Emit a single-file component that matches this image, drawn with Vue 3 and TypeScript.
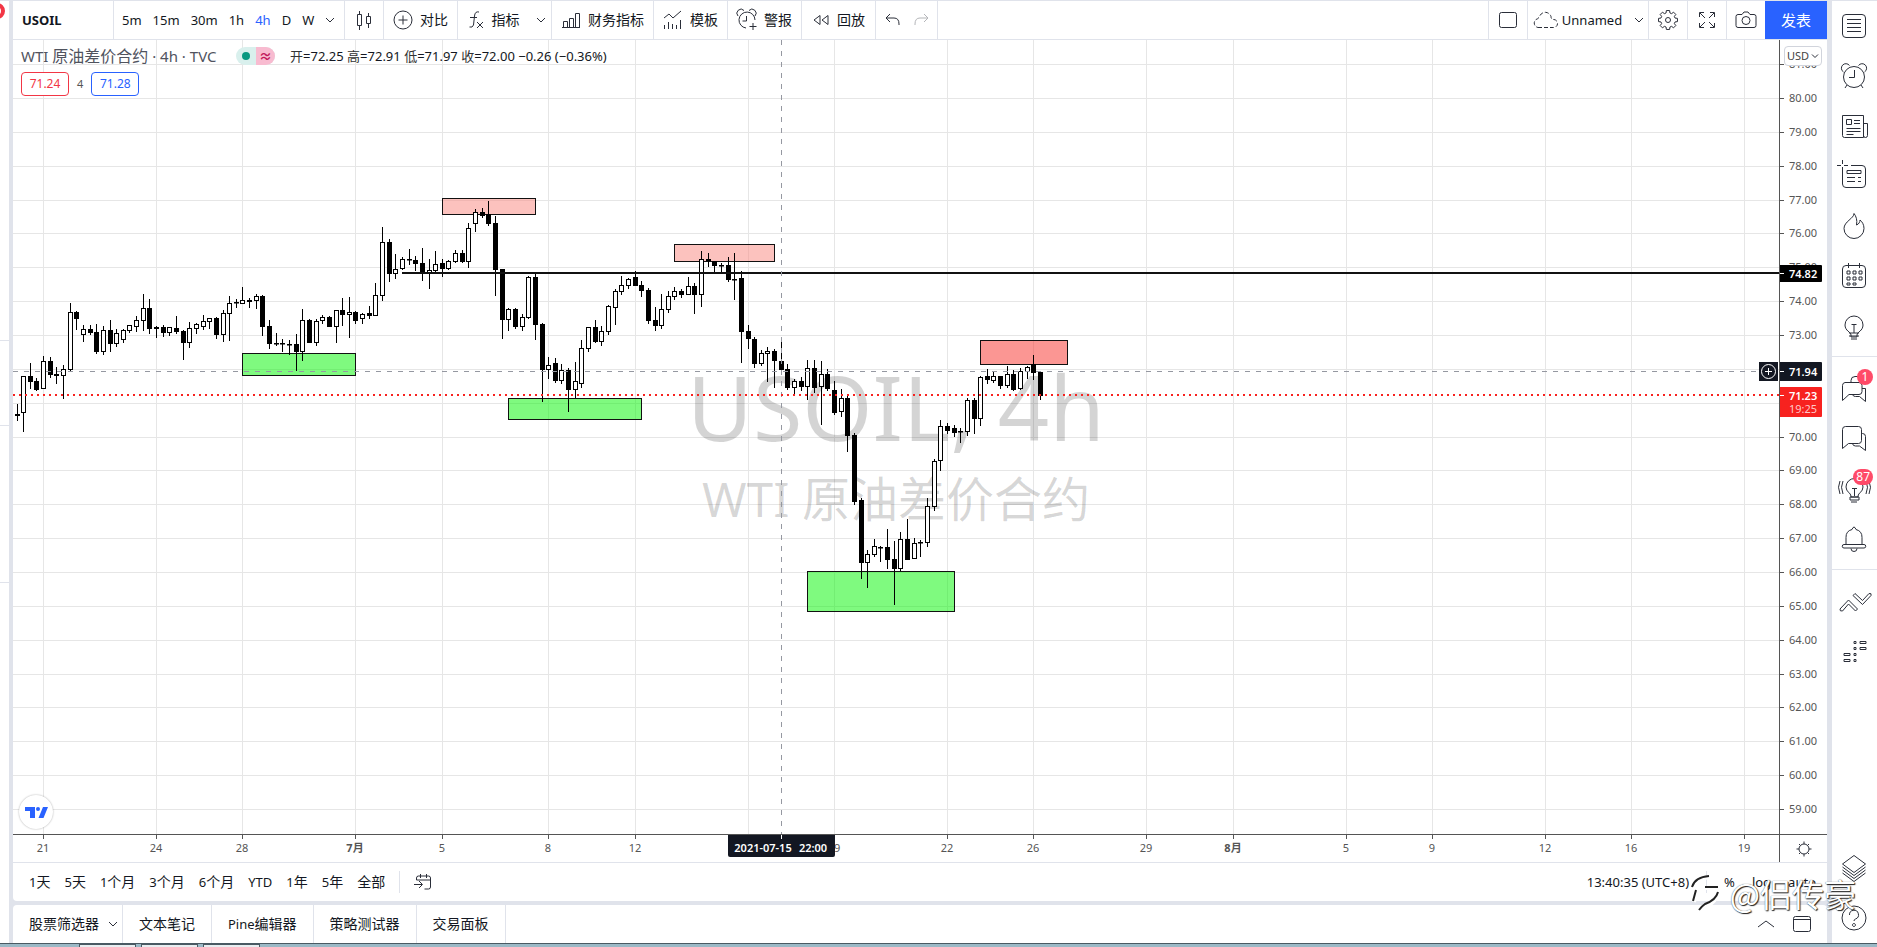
<script setup lang="ts">
interface Candle { x: number; high: number; top: number; bottom: number; low: number; down: boolean }

// x, high, body top, body bottom, low, falling
const series = `17 404 414 416 421 1;23 376 376 413 432 0;30 363 376 382 389 1;36 378 381 390 391 1;43 356 361 389 389 0;50 357 361 375 378 1;56 367 374 376 384 1;63 365 369 376 399 0;70 303 312 370 371 0;76 311 312 319 330 1;83 325 329 335 342 0;90 325 329 333 335 1;96 324 332 352 354 1;103 326 330 352 355 0;110 320 330 344 352 1;116 329 333 344 347 0;123 329 330 340 343 0;129 325 325 331 333 0;136 316 320 327 332 0;143 294 308 321 331 0;149 299 308 329 334 1;156 326 327 329 338 1;163 325 327 333 337 1;169 327 327 333 336 0;176 316 328 332 334 1;183 330 331 343 360 1;189 322 328 343 348 0;196 323 324 329 334 0;203 315 321 327 330 0;209 318 318 322 329 0;216 317 318 335 339 1;223 310 313 335 342 0;229 296 303 314 341 0;236 299 302 303 308 1;242 287 300 304 304 0;249 298 300 302 308 1;256 294 296 301 309 0;262 295 296 327 336 1;269 320 326 344 349 1;276 333 343 344 346 1;282 339 343 344 352 1;289 340 344 344 355 1;296 334 344 352 371 1;302 309 320 352 361 0;309 319 320 343 343 1;316 319 321 343 346 0;322 315 317 321 324 0;329 316 317 327 327 1;336 310 310 327 343 0;342 298 310 315 326 1;349 297 312 315 338 0;355 311 312 321 324 1;362 313 314 319 324 0;369 306 313 316 319 1;375 283 295 316 316 0;382 227 242 296 301 0;389 239 242 274 282 1;395 254 269 274 279 0;402 257 259 269 270 0;409 249 259 260 265 1;415 256 260 264 271 1;422 248 263 274 281 1;429 259 270 273 289 0;435 251 264 271 272 0;442 259 263 269 277 1;448 260 261 269 270 0;455 250 253 262 263 0;462 250 253 262 263 1;468 223 228 262 268 0;475 209 212 224 232 0;482 208 212 216 218 1;488 201 214 224 226 1;495 216 223 270 296 1;502 269 269 320 339 1;508 308 309 320 331 0;515 308 309 327 329 1;522 314 317 327 331 0;528 276 277 318 319 0;535 274 277 325 340 1;542 323 324 370 402 1;548 357 365 370 379 0;555 358 363 381 383 1;561 364 370 381 384 0;568 368 370 390 412 1;575 362 381 390 398 0;581 340 348 384 388 0;588 327 327 349 352 0;595 320 327 342 343 1;601 326 331 342 346 0;608 305 306 332 335 0;615 289 291 308 325 0;621 276 285 292 295 0;628 278 279 286 289 0;635 271 277 286 286 1;641 281 285 291 297 1;648 288 290 321 324 1;655 307 320 326 331 1;661 294 309 326 329 0;668 291 296 310 313 0;674 287 291 297 300 0;681 289 291 295 298 1;688 277 286 295 295 0;694 283 286 295 314 1;701 251 259 295 307 0;708 253 259 261 267 1;714 261 261 266 272 1;721 263 265 265 272 1;728 257 265 280 282 1;734 253 279 280 300 1;741 271 278 332 363 1;748 325 331 339 349 1;754 337 339 364 368 1;761 350 353 364 366 0;767 347 351 354 382 0;774 349 351 361 388 1;781 342 361 370 370 1;787 364 369 388 390 1;794 379 381 388 394 0;801 377 381 387 391 1;807 360 368 387 400 0;814 360 368 388 393 1;821 361 374 387 425 0;827 369 374 389 391 1;834 381 390 413 415 1;841 389 398 412 417 0;847 396 398 436 452 1;854 433 435 502 505 1;861 498 500 563 579 1;867 550 554 563 588 0;874 539 546 555 557 0;880 546 547 548 562 1;887 529 547 560 569 1;894 541 559 569 605 1;900 532 539 569 571 0;907 519 539 560 560 1;914 538 543 559 559 0;920 540 542 543 557 1;927 498 506 543 547 0;934 459 461 507 511 0;940 420 426 461 471 0;947 423 426 431 434 1;954 425 428 433 437 1;960 428 431 432 443 1;967 398 400 432 436 0;974 398 400 419 434 1;980 376 377 419 426 0;987 369 376 380 384 1;993 372 376 381 383 0;1000 376 376 386 389 1;1007 366 374 386 388 0;1013 370 374 390 391 1;1020 368 371 389 390 0;1027 366 367 372 379 0;1033 355 364 373 380 1;1040 372 372 396 400 1`

const candles: Candle[] = series.split(';').map(row => {
  const [x, high, top, bottom, low, down] = row.split(' ').map(Number)
  return { x, high, top, bottom, low, down: down === 1 }
})

const zones = [
  { x: 242, y: 353, w: 113, h: 22, kind: 'green' },
  { x: 442, y: 198, w: 93, h: 16, kind: 'pink' },
  { x: 508, y: 398, w: 133, h: 21, kind: 'green' },
  { x: 674, y: 244, w: 100, h: 17, kind: 'pink' },
  { x: 807, y: 571, w: 147, h: 40, kind: 'green' },
  { x: 980, y: 340, w: 87, h: 24, kind: 'red' },
]

const prices = Array.from({ length: 23 }, (_, i) => {
  const value = 81 - i
  return { value, y: Math.round(98 + (80 - value) * 33.86) }
})
const shownPrices = prices.filter(p => p.value !== 72 && p.value !== 71)

const dates = [
  [43, '21'], [156, '24'], [242, '28'], [355, '7月'], [442, '5'], [548, '8'], [635, '12'], [748, ''], [834, '19'],
  [947, '22'], [1033, '26'], [1146, '29'], [1233, '8月'], [1346, '5'], [1432, '9'], [1545, '12'], [1631, '16'], [1744, '19'],
].map(([x, label]) => ({ x: Number(x), label: String(label) }))

const intervals = ['5m', '15m', '30m', '1h', '4h', 'D', 'W']
const ranges: [string, string][] = [['1', '天'], ['5', '天'], ['1', '个月'], ['3', '个月'], ['6', '个月'], ['YTD', ''], ['1', '年'], ['5', '年'], ['', '全部']]

// Eight-tooth cog outline around (11, 11)
const gear = Array.from({ length: 8 }, (_, i) => [[-0.27, 7.3], [-0.17, 9.6], [0.17, 9.6], [0.27, 7.3]].map(([turn, r], k) => {
  const a = i * Math.PI / 4 + turn
  return `${i + k === 0 ? 'M' : 'L'}${(11 + r * Math.cos(a)).toFixed(2)} ${(11 + r * Math.sin(a)).toFixed(2)}`
}).join('')).join('') + 'z'

const bulb = 'M12 26v-2c0-3-6-4-6-10a9 9 0 0 1 18 0c0 6-6 7-6 10v2zM10 22h10M10 25h10M12 28h6M15 22v-8M12.500 13.500h5'
const sideTop = [
  { name: '自选表', d: 'M7 3.500h16a3.500 3.500 0 0 1 3.500 3.500v16a3.500 3.500 0 0 1-3.500 3.500h-16a3.500 3.500 0 0 1-3.500-3.500v-16a3.500 3.500 0 0 1 3.500-3.500zM8 8.500h14M8 12.500h14M8 16.500h14M8 20.500h14' },
  { name: '警报', d: 'M25.500 16a10.500 10.500 0 1 1-21 0a10.500 10.500 0 1 1 21 0zM15.500 9v7.500h-5.500M4.500 11a4.500 4.500 0 1 1 6-6.500M25.500 11a4.500 4.500 0 1 0-6-6.500M8 24l-2 3M22 24l2 3' },
  { name: '新闻', d: 'M3.500 4.500h21v22h-19a2 2 0 0 1-2-2zM24.500 12.500h4v12a2 2 0 0 1-4 0M7.500 8.500h5v5h-5zM15 9.500h6M15 12.500h6M7.500 17.500h14M7.500 20.500h14M7.500 23.500h7' },
  { name: '数据窗口', d: 'M12 4.500h11a3.500 3.500 0 0 1 3.500 3.500v15a3.500 3.500 0 0 1-3.500 3.500h-16a3.500 3.500 0 0 1-3.500-3.500v-14M3.500-1v4M3.500 6v3M-2 4.500h4M5 4.500h4M8 9.500h14v3h-14zM8 16.500h8M19 16.500h3M8 20.500h8M19 20.500h3' },
  { name: '热点', d: 'M15 2.500c0 5-10 8-10 15a10 10 0 0 0 20 0c0-4-2-7-4-8.500c0 2-1 4-3.500 5c1-5-.5-9-2.500-11.500z' },
  { name: '日历', d: 'M7 4.500h16a3.500 3.500 0 0 1 3.500 3.500v15a3.500 3.500 0 0 1-3.500 3.500h-16a3.500 3.500 0 0 1-3.500-3.500v-15a3.500 3.500 0 0 1 3.500-3.500zM9.500 2v5M20.500 2v5M8 10h3v3h-3zM14 10h3v3h-3zM20 10h3v3h-3zM8 16h3v3h-3zM14 16h3v3h-3zM20 16h3v3h-3zM8 22h3v2h-3zM14 22h3v2h-3z' },
  { name: '观点', d: bulb },
]
const sideMid = [
  { name: '公共聊天', badge: '1', d: 'M6 8.500h14a3 3 0 0 1 3 3v6a3 3 0 0 1-3 3h-10l-6.500 6v-15a3 3 0 0 1 2.500-3zM12 8.500v-2a4 4 0 0 1 4-4h6M23 14.500h3.500v13l-6-5h-4a3 3 0 0 1-3-2' },
  { name: '私人聊天', badge: '', d: 'M6.500 2.500h13a3 3 0 0 1 3 3v11a3 3 0 0 1-3 3h-10l-6 5v-19a3 3 0 0 1 3-3zM22.500 9.500h1a3 3 0 0 1 3 3v14l-6-4.500h-4a3 3 0 0 1-3-2.500' },
  { name: '观点流', badge: '87', d: 'M12 23v-1c0-3-5-4-5-9a8.500 8.500 0 0 1 17 0c0 5-5 6-5 9v1zM11 23h9v3h-9zM12 28h6M15.500 22v-7M13 14.500h5M4 7q-3 6 0 13M1 7q-3 6 0 13M27 7q3 6 0 13M30 7q3 6 0 13' },
  { name: '通知', badge: '', d: 'M7 20.500v-7a8 8 0 0 1 6-8q2-5 4 0a8 8 0 0 1 6 8v7M5 20.500h20a1.500 1.500 0 0 1 0 3.500h-20a1.500 1.500 0 0 1 0-3.500zM12 24.500a3 3 0 0 0 6 0' },
]
const sideLow = [
  { name: '订单面板', d: 'M1 22l8.500-9l9 9l-2 2l-7-7l-6 7q-3 .5-2.500-2zM14 8.500l2-2l7.500 7l6.500-7q3-.5 2 2l-8.500 9z' },
  { name: '深度报价', d: 'M15 4.500h2v2h-2zM21 4.500h6v2h-6zM15 10.500h2v2h-2zM21 10.500h6v2h-6zM5 16.500h6v2h-6zM15 16.500h2v2h-2zM5 22.500h6v2h-6zM15 22.500h2v2h-2z' },
]
const caret = 'M1 3l4 4l4-4'
</script>

<template>
  <div class="app">
    <div class="workspace">
      <aside class="left-edge"><span class="edge-badge"></span><i class="edge-line one"></i><i class="edge-line two"></i><i class="edge-line three"></i></aside>

      <main class="main">
        <header class="toolbar">
          <button class="symbol">USOIL</button>
          <div class="cell intervals">
            <button v-for="i in intervals" :key="i" :class="{ on: i === '4h' }">{{ i }}</button>
            <button aria-label="更多周期"><svg width="10" height="10"><path :d="caret" /></svg></button>
          </div>
          <button class="cell icon-only" aria-label="K线图"><svg width="18" height="22"><path d="M2.500 5.500h4v11h-4zM4.500 2v3M4.500 17v4M11.500 7.500h4v7h-4zM13.500 4v3M13.500 15v4" /></svg></button>
          <button class="cell"><svg width="20" height="20"><path d="M19 10a9 9 0 1 1-18 0a9 9 0 1 1 18 0zM10 5.500v9M5.500 10h9" /></svg>对比</button>
          <button class="cell wide-icon"><svg width="16" height="20"><path d="M11 2q-4-1-4.500 4l-1 9q-1 3-4 2M2 7.500h7M9 12l6 6M15 12l-6 6" /></svg>指标<svg class="far" width="10" height="10"><path :d="caret" /></svg></button>
          <button class="cell"><svg width="20" height="20"><path d="M2.500 17.500v-6h4v6zM8.500 17.500v-9h4v9zM14.500 17.500v-14h4v14zM1 17.500h18" /></svg>财务指标</button>
          <button class="cell"><svg width="20" height="20"><path d="M1 8l5-4l4 4l8-7M1.500 15v4M5.500 12v7M9.500 14v5M13.500 15v4M17.500 10v9" /></svg>模板</button>
          <button class="cell"><svg width="20" height="22"><path d="M9 19a8 8 0 1 1 9-8M9.500 7v5h-4M1 7a4 4 0 0 1 6-5.500M12 1.500a4 4 0 0 1 6 5.500M16 14v7M12.500 17.500h7" /></svg>警报</button>
          <button class="cell replay"><svg width="18" height="20"><path d="M8 5.500v9l-6-4.500zM16 5.500v9l-6-4.500z" /></svg>回放</button>
          <div class="cell history">
            <button aria-label="撤销"><svg width="16" height="16"><path d="M5 2l-4 4l4 4M1 6h8q5 0 5 6v1" /></svg></button>
            <button class="faded" aria-label="重做"><svg width="16" height="16"><path d="M11 2l4 4l-4 4M15 6h-8q-5 0-5 6v1" /></svg></button>
          </div>
          <span class="grow"></span>
          <button class="cell tool" aria-label="布局"><svg width="20" height="18"><rect x="1.500" y="1.500" width="17" height="15" rx="2" /></svg></button>
          <button class="cell layout-name"><svg width="26" height="20"><path stroke-dasharray="4 2" d="M6 17.500h15a4 4 0 0 0 1-8q-3 0-3-3a6 6 0 0 0-11-1q-1 3-4 4a4.500 4.500 0 0 0 2 8z" /></svg><span>Unnamed</span><svg class="far" width="10" height="10"><path :d="caret" /></svg></button>
          <button class="cell tool" aria-label="设置"><svg width="22" height="22"><path stroke-linejoin="round" :d="gear" /><circle cx="11" cy="11" r="2.500" /></svg></button>
          <button class="cell tool" aria-label="全屏"><svg width="18" height="18"><path d="M1.500 6v-4.500h4.500M2 2l5 5M12 1.500h4.500v4.500M16 2l-5 5M1.500 12v4.500h4.500M2 16l5-5M16.500 12v4.500h-4.500M16 16l-5-5" /></svg></button>
          <button class="cell tool" aria-label="截图"><svg width="22" height="18"><path d="M3 3.500h4l2-2.500h4l2 2.500h4a2 2 0 0 1 2 2v9a2 2 0 0 1-2 2h-16a2 2 0 0 1-2-2v-9a2 2 0 0 1 2-2zM15 9.500a4 4 0 1 1-8 0a4 4 0 1 1 8 0z" /></svg></button>
          <button class="publish">发表</button>
        </header>

        <section class="plot">
          <div class="canvas">
            <svg class="layer" aria-label="USOIL 4h">
              <g transform="translate(-13,-40)">
                <path v-for="p in prices" :key="p.value" class="grid" :d="`M13 ${p.y + .5}H4000`" />
                <path v-for="d in dates" :key="d.x" class="grid" :d="`M${d.x + .5} 40V3000`" />
              </g>
            </svg>
            <div class="watermark"><strong>USOIL, 4h</strong><span>WTI 原油差价合约</span></div>
            <svg class="layer">
              <g transform="translate(-13,-40)">
                <rect v-for="z in zones" :key="z.x" :class="['zone', z.kind]" :x="z.x + .5" :y="z.y + .5" :width="z.w" :height="z.h" />
                <g v-for="c in candles" :key="c.x">
                  <path class="wick" :d="`M${c.x + .5} ${c.high}V${c.low}`" />
                  <rect :class="['body', { down: c.down }]" :x="c.x - 1.5" :y="c.top + .5" width="4" :height="Math.max(c.bottom - c.top - 1, 0.5)" />
                </g>
                <path class="level" d="M402 273H4000" />
                <path class="cross" d="M13 371.500H4000M781.500 40V3000" />
                <path class="last" d="M13 395H4000" />
              </g>
            </svg>

            <div class="legend">
              <div class="title"><h1><small>WTI </small>原油差价合约<small> · 4h · TVC</small></h1>
                <span class="status"><i></i><b>≈</b></span>
                <p>开<em>=72.25</em> 高<em>=72.91</em> 低<em>=71.97</em> 收<em>=72.00 −0.26 (−0.36%)</em></p>
              </div>
              <div class="quotes"><button class="sell">71.24</button><span>4</span><button class="buy">71.28</button></div>
            </div>
            <a class="logo" href="#" aria-label="TradingView"><svg width="34" height="34"><path d="M6 12h10v11h-5v-7h-5zM24 12h5l-4.500 11h-5z" /><circle cx="19" cy="14" r="2" /></svg></a>
            <button class="add" aria-label="添加"><svg width="19" height="19"><circle cx="9.500" cy="9.500" r="7" /><path d="M9.500 6v7M6 9.500h7" /></svg></button>
          </div>
          <div class="price-axis">
            <svg class="layer">
              <g transform="translate(-1780,-40)">
                <g v-for="p in shownPrices" :key="p.value">
                  <path class="tick" :d="`M1780 ${p.y + .5}h4`" /><text x="1789" :y="p.y + 4">{{ p.value }}.00</text>
                </g>
                <rect x="1779" y="265" width="43" height="17" rx="1" />
                <rect class="ink" x="1779" y="362" width="43" height="19" rx="1" />
                <rect class="red" x="1779" y="387" width="43" height="30" rx="1" />
                <path class="tick light" d="M1780 273.500h4M1780 371.500h4M1780 395.500h4" />
                <text class="bold" x="1789" y="278">74.82</text>
                <text class="bold" x="1789" y="376">71.94</text>
                <text class="bold" x="1789" y="400">71.23</text>
                <text class="soft" x="1789" y="413">19:25</text>
              </g>
            </svg>
            <button class="currency">USD<svg width="8" height="8"><path d="M1 2.500l3 3l3-3" /></svg></button>
          </div>
        </section>

        <section class="time-axis">
          <svg class="times">
            <g transform="translate(-13,0)">
              <g v-for="d in dates" :key="d.x"><path class="tick" :d="`M${d.x + .5} 0v4`" /><text v-if="d.label" :class="{ month: d.label.includes('月') }" :x="d.x" y="17">{{ d.label }}</text></g>
              <rect class="ink" x="728" y="-2" width="107" height="24" rx="2" /><path class="tick light" d="M781.500 0v4" />
              <text class="bold" x="763" y="17">2021-07-15</text><text class="bold" x="813" y="17">22:00</text>
            </g>
          </svg>
          <button class="axis-settings" aria-label="坐标设置"><svg width="18" height="18"><circle cx="9" cy="9" r="5" /><path d="M9 1.500v2.500M9 14v2.500M1.500 9h2.500M14 9h2.500M4 4l1.500 1.500M12.500 12.500l1.500 1.500M14 4l-1.500 1.500M5.500 12.500l-1.500 1.500" /></svg></button>
        </section>

        <nav class="range-bar">
          <button v-for="(r, i) in ranges" :key="i"><small>{{ r[0] }}</small>{{ r[1] }}</button>
          <i class="rule"></i>
          <button aria-label="前往日期"><svg width="18" height="18"><path d="M2.500 7v-2a2 2 0 0 1 2-2h10a2 2 0 0 1 2 2v9a2 2 0 0 1-2 2h-4M6.500 1v4M12.500 1v4M2.500 7h14M0 11.500h8M5 8l3.500 3.500l-3.500 3.500" /></svg></button>
          <span class="grow"></span>
          <div class="clock"><button><small>13:40:35 (UTC+8)</small></button><i class="rule"></i><button><small>%</small></button><button><small>log</small></button><button><small>auto</small></button></div>
        </nav>

        <nav class="tabs">
          <button>股票筛选器<svg class="near" width="10" height="10"><path :d="caret" /></svg></button>
          <button>文本笔记</button><button><small>Pine</small>编辑器</button><button>策略测试器</button><button>交易面板</button>
          <span class="grow"></span>
          <div class="panel-tools">
            <button aria-label="展开面板"><svg width="20" height="12"><path d="M2 9l8-6l8 6" /></svg></button>
            <button aria-label="最大化面板"><svg width="20" height="18"><rect x="1.500" y="1.500" width="17" height="15" rx="2" /><path d="M2 4.500h16" /></svg></button>
          </div>
        </nav>
      </main>

      <aside class="sidebar">
        <div class="group"><button v-for="s in sideTop" :key="s.name" :aria-label="s.name"><svg width="30" height="30"><path :d="s.d" /></svg></button></div>
        <div class="group"><button v-for="s in sideMid" :key="s.name" :aria-label="s.name"><svg width="30" height="30"><path :d="s.d" /></svg><b v-if="s.badge">{{ s.badge }}</b></button></div>
        <div class="group last-group"><button v-for="s in sideLow" :key="s.name" :aria-label="s.name"><svg width="30" height="30"><path :d="s.d" /></svg></button></div>
        <span class="grow"></span>
        <button aria-label="对象树"><svg width="30" height="30"><path d="M15 2.500l11.500 8.500l-11.500 8.500l-11.500-8.500zM3.500 14l11.500 8.500l11.500-8.500M3.500 17l11.500 8.500l11.500-8.500M3.500 20l11.500 8.500l11.500-8.500" /></svg></button>
        <button aria-label="帮助"><svg width="30" height="30"><circle cx="15" cy="15" r="12" /><path d="M10.500 12a4.500 4.500 0 1 1 6 4q-1.500.5-1.500 2M15 20.500a1.500 1.500 0 1 1-.1 0z" /></svg></button>
      </aside>
    </div>
    <footer class="desktop"><i></i><i></i><i></i></footer>
    <div class="signature"><svg width="30" height="38"><path class="shine" d="M3 14q3-10 17-11M7 17l-3 11M15 14h13q2 14-20 23" /><path class="shade" d="M2 13q3-10 17-11M6 16l-3 11M15 13h13M28 18q-2 8-13 12q-3 2-6 6" /></svg>@侣传豪</div>
  </div>
</template>

<style>
html, body { margin: 0; background: #e0e3eb; }
</style>

<style scoped>
.app { position: relative; display: flex; flex-direction: column; height: 100vh; overflow: hidden; color: #131722; background: #e0e3eb; font: 14px/18px "Noto Sans", "Noto Sans CJK SC", sans-serif; }
.app * { box-sizing: border-box; }
button { display: flex; align-items: center; justify-content: center; margin: 0; padding: 0; border: 0; background: none; color: inherit; font: inherit; white-space: nowrap; }
small { font-size: 13px; white-space: pre; }
svg { flex: none; fill: none; stroke: #2a2e39; display: block; overflow: visible; }
.grow { flex: 1; }
.workspace { flex: 1; min-height: 0; display: flex; padding-top: 1px; }
.left-edge { position: relative; width: 9px; margin-right: 4px; background: #fff; overflow: hidden; }
.edge-badge { position: absolute; left: -11px; top: 2px; width: 16px; height: 16px; border: 4px solid #f23645; border-radius: 50%; }
.edge-line { position: absolute; left: 0; width: 9px; height: 1px; background: #e0e3eb; }
.one { top: 339px; } .two { top: 424px; } .three { top: 581px; }
.main { flex: 1; min-width: 0; display: flex; flex-direction: column; }

.toolbar { display: flex; height: 39px; background: #fff; border-bottom: 1px solid #e0e3eb; }
.symbol { width: 100px; justify-content: flex-start; padding: 0 0 0 9px; font-size: 13px; font-weight: 700; }
.cell { display: flex; align-items: center; gap: 7px; padding: 0 9px; border-left: 1px solid #e0e3eb; }
.intervals { gap: 11px; padding: 0 6px 0 8px; font-size: 13px; width: 231px; }
.intervals .on { color: #2962ff; }
.icon-only { width: 39px; }
.far { margin-left: 8px; }
.wide-icon { width: 94px; gap: 8px; padding: 0 0 0 4px; }
.replay { padding: 0 10px; }
.history { gap: 12px; width: 63px; border-right: 1px solid #e0e3eb; padding: 0 9px; }
.faded { opacity: .35; }
.tool { width: 39px; padding: 0; justify-content: center; }
.layout-name { width: 121px; padding: 0; gap: 4px; font-size: 13px; }
.publish { width: 62px; background: #2962ff; color: #fff; font-size: 15px; }

.plot { flex: 1; min-height: 0; display: flex; background: #fff; }
.canvas { position: relative; flex: 1; overflow: hidden; }
.layer { position: absolute; inset: 0; width: 100%; height: 100%; overflow: hidden; }
.grid { stroke: #e6e6e6; }
.zone { stroke: #111; }
.green { fill: #00f50080; } .pink { fill: #fa867d80; } .red.zone { fill: #f7362f85; }
.wick { stroke: #000; }
.body { fill: #fff; stroke: #000; }
.body.down { fill: #000; }
.level { stroke: #111; stroke-width: 2; }
.cross { stroke: #9598a1; stroke-dasharray: 5 6; }
.last { stroke: #f7221f; stroke-width: 2; stroke-dasharray: 2 4; }
.watermark { position: absolute; inset: 0; display: flex; flex-direction: column; align-items: center; justify-content: center; gap: 9px; padding-top: 10px; color: #0000002b; white-space: nowrap; }
.watermark strong { font-size: 90px; line-height: 104px; font-weight: 400; }
.watermark span { font-size: 48px; line-height: 64px; }

.legend { position: absolute; left: 8px; top: 6px; }
.title { display: flex; align-items: center; height: 20px; }
.title h1 { margin: 0; font-size: 16px; font-weight: 400; line-height: 20px; color: #50535e; width: 215px; white-space: nowrap; }
.title h1 small { font-size: 15px; }
.status { display: flex; width: 39px; height: 18px; border-radius: 9px; overflow: hidden; background: #d9f0ed; }
.status i { width: 8px; height: 8px; margin: 5px 6px; border-radius: 50%; background: #089981; }
.status b { flex: 1; background: #f8bbd0; color: #c2185b; font-size: 13px; line-height: 18px; text-align: center; }
.title p { margin: 0 0 0 15px; font-size: 13px; line-height: 20px; white-space: nowrap; color: #333; }
.title em { font-style: normal; color: #131722; }
.quotes { display: flex; align-items: center; gap: 8px; margin-top: 6px; font-size: 12px; }
.quotes button { width: 48px; height: 24px; border: 1px solid; border-radius: 4px; background: #fff; }
.sell { color: #f23645; } .buy { color: #2962ff; }
.quotes span { color: #555; font-size: 11px; }
.logo { position: absolute; left: 6px; bottom: 5px; width: 34px; height: 34px; border-radius: 50%; background: #fff; box-shadow: 0 0 2px #0005; }
.logo svg { fill: #2962ff; stroke: none; }
.add { position: absolute; right: 1px; top: 322px; width: 19px; height: 19px; background: #131722; }
.add svg { stroke: #fff; }

.price-axis { position: relative; width: 48px; border-left: 1px solid #555; }
.price-axis text, .times text { fill: #555; stroke: none; font-size: 11px; }
.price-axis rect { fill: #000; stroke: none; }
.price-axis .ink, .times .ink { fill: #131722; stroke: none; }
.price-axis .red { fill: #f7221f; }
.tick { stroke: #555; }
.tick.light { stroke: #fff; }
.price-axis .bold, .times .bold { fill: #fff; font-weight: 600; font-size: 11px; }
.price-axis .soft { fill: #ffc9c9; }
.currency { position: absolute; left: 4px; top: 6px; width: 38px; height: 20px; border: 1px solid #d1d4dc; border-radius: 4px; background: #fff; font-size: 11px; gap: 2px; color: #444; }

.time-axis { display: flex; height: 29px; background: #fff; border-top: 1px solid #555; border-bottom: 1px solid #e0e3eb; }
.times { flex: 1; min-width: 0; height: 27px; overflow: hidden; }
.times text { text-anchor: middle; }
.times .month { font-weight: 700; }
.axis-settings { width: 48px; border-left: 1px solid #555; }

.range-bar { display: flex; align-items: center; gap: 14px; height: 38px; padding: 0 11px 0 16px; background: #fff; border-radius: 0 0 4px 4px; }
.rule { width: 1px; height: 22px; background: #e0e3eb; }
.clock { display: flex; align-items: center; gap: 17px; }
.tabs { display: flex; height: 38px; margin-top: 4px; background: #fff; border-radius: 4px 4px 0 0; }
.tabs > button { padding: 0 16px; border-right: 1px solid #e0e3eb; }
.tabs > button:first-child { padding-right: 4px; }
.near { margin-left: 9px; }
.panel-tools { display: flex; align-items: center; gap: 16px; padding-right: 15px; }

.sidebar { width: 45px; margin-left: 5px; display: flex; flex-direction: column; background: #fff; }
.sidebar button { position: relative; width: 44px; height: 50px; }
.group { padding-bottom: 5px; border-bottom: 1px solid #e0e3eb; }
.group + .group { padding-top: 7px; }
.group.last-group { border: 0; }
.sidebar b { position: absolute; right: 3px; top: 5px; min-width: 16px; height: 16px; padding: 0 3px; border-radius: 8px; background: #ff4a68; color: #fff; font-size: 12px; line-height: 16px; font-weight: 400; text-align: center; }

.desktop { display: flex; gap: 5px; height: 4px; padding-left: 79px; border-top: 1px solid #4a5a63; background: #9bb9c6; }
.desktop i { width: 57px; background: #e8eef1; border: 1px solid #4a5a63; border-bottom: 0; }
.signature { position: absolute; right: 21px; bottom: 34px; display: flex; align-items: center; gap: 10px; color: #fff; font-family: "Noto Sans CJK SC", sans-serif; font-size: 32px; line-height: 40px; text-shadow: 1px 1px 1px #222, 0 0 1px #444; }
.signature .shade { stroke: #222; stroke-width: 2; }
.signature .shine { stroke: #fff; stroke-width: 4; }
</style>
